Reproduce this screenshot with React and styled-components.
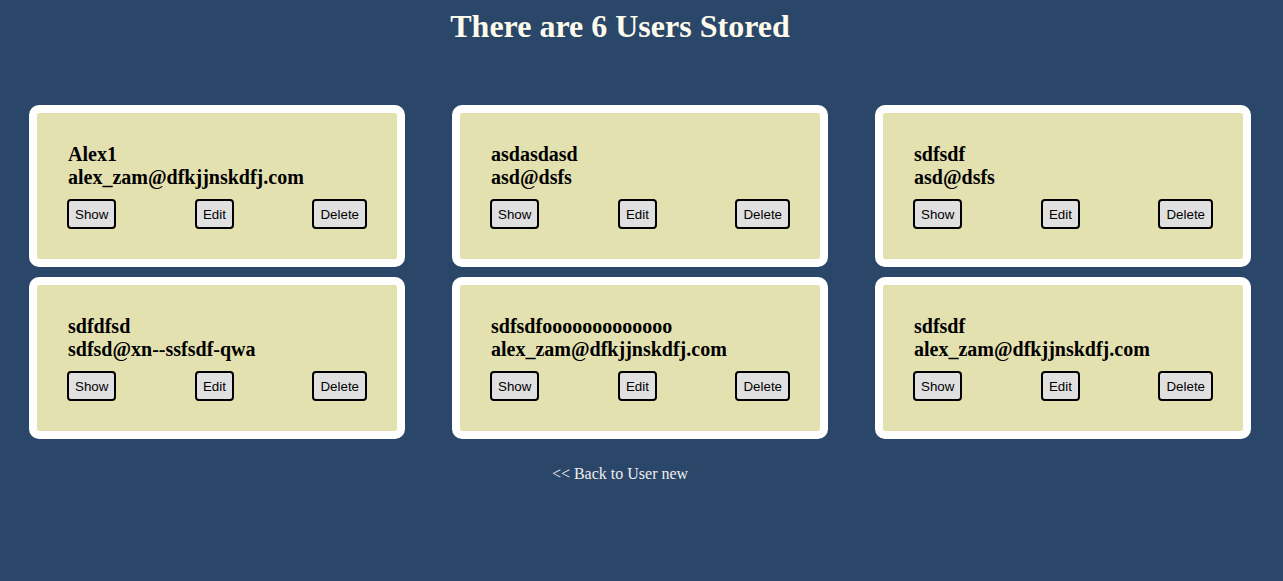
import React from "react";
import styled, { createGlobalStyle } from "styled-components";

const users = [
  { name: "Alex1", email: "alex_zam@dfkjjnskdfj.com" },
  { name: "asdasdasd", email: "asd@dsfs" },
  { name: "sdfsdf", email: "asd@dsfs" },
  { name: "sdfdfsd", email: "sdfsd@xn--ssfsdf-qwa" },
  { name: "sdfsdfooooooooooooo", email: "alex_zam@dfkjjnskdfj.com" },
  { name: "sdfsdf", email: "alex_zam@dfkjjnskdfj.com" },
];

const GlobalStyle = createGlobalStyle`
  html, body {
    margin: 0;
    background: #2a4669;
    font-family: "Liberation Serif", "Times New Roman", serif;
  }
`;

const Page = styled.div`
  min-height: 581px;
  background: #2a4669;
`;

const Title = styled.h1`
  margin: 0;
  padding: 8px 43px 0 0;
  font-size: 32px;
  line-height: 37px;
  font-weight: bold;
  text-align: center;
  color: #fdfbec;
`;

const Grid = styled.div`
  display: grid;
  grid-template-columns: repeat(3, 376px);
  column-gap: 47px;
  row-gap: 10px;
  margin-top: 60px;
  padding-left: 29px;
`;

const Card = styled.div`
  border: 8px solid #fff;
  border-radius: 10px;
  background: #e4e1b0;
  padding: 30px;
`;

const Info = styled.div`
  padding-left: 1px;
  font-size: 20px;
  line-height: 23px;
  font-weight: bold;
  color: #000;
`;

const Actions = styled.div`
  display: flex;
  justify-content: space-between;
  margin-top: 10px;
`;

const Button = styled.button`
  font-family: "Liberation Sans", Arial, sans-serif;
  font-size: 13.33px;
  line-height: 16px;
  padding: 6px 6px 4px;
  height: 30px;
  border: 2px solid #000;
  border-radius: 4px;
  background: #e0e0e0;
  color: #000;
  cursor: pointer;
`;

const Footer = styled.div`
  margin-top: 26px;
  padding-right: 43px;
  text-align: center;
  font-size: 16px;
  line-height: 18px;
`;

const BackLink = styled.a`
  color: #eeeeee;
  text-decoration: none;
`;

export default function App() {
  return (
    <Page>
      <GlobalStyle />
      <Title>There are {users.length} Users Stored</Title>
      <Grid>
        {users.map((u, i) => (
          <Card key={i}>
            <Info>
              <div>{u.name}</div>
              <div>{u.email}</div>
            </Info>
            <Actions>
              <Button>Show</Button>
              <Button>Edit</Button>
              <Button>Delete</Button>
            </Actions>
          </Card>
        ))}
      </Grid>
      <Footer>
        <BackLink href="#">&lt;&lt; Back to User new</BackLink>
      </Footer>
    </Page>
  );
}
